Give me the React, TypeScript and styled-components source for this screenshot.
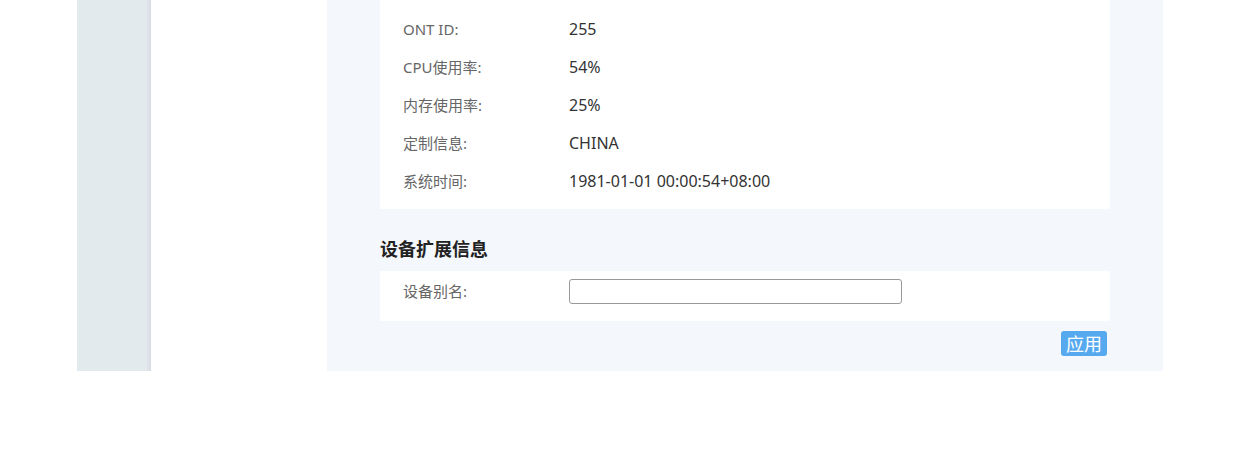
import React from "react";
import styled, { createGlobalStyle } from "styled-components";

const Global = createGlobalStyle`
  html, body { margin: 0; padding: 0; background: #ffffff; }
  body { font-family: "Noto Sans", "Noto Sans CJK SC", sans-serif; }
`;

const Page = styled.div`
  display: flex;
  align-items: stretch;
  padding-left: 77px;
  height: 371px;
`;

const Sidebar = styled.div`
  width: 74px;
  background: linear-gradient(to right, #e3eaee 0, #e3eaee 69px, #dde3e8 71px, #d6dce2 74px);
`;

const Spacer = styled.div`
  width: 176px;
`;

const Panel = styled.div`
  width: 836px;
  box-sizing: border-box;
  background: #f4f7fb;
  padding: 0 53px 15px;
  display: flex;
  flex-direction: column;
`;

const Card = styled.div<{ $pad: string }>`
  background: #ffffff;
  padding: ${(p) => p.$pad};
  display: flex;
  flex-direction: column;
`;

const Row = styled.div<{ $h: number; $align: string }>`
  display: flex;
  align-items: ${(p) => p.$align};
  height: ${(p) => p.$h}px;
  line-height: ${(p) => p.$h}px;
`;

const Label = styled.div`
  width: 166px;
  font-size: 15px;
  color: #666666;
`;

const Value = styled.div`
  font-size: 16px;
  color: #333333;
`;

const Heading = styled.div`
  margin: 25px 0 7px;
  font-size: 18px;
  line-height: 30px;
  font-weight: 600;
  color: #222222;
`;

const TextInput = styled.input`
  width: 333px;
  height: 25px;
  box-sizing: border-box;
  border: 1px solid #999999;
  border-radius: 3px;
  background: #ffffff;
  padding: 0 6px;
  font-size: 14px;
  outline: none;
`;

const Actions = styled.div`
  display: flex;
  justify-content: flex-end;
  margin-top: 10px;
  padding-right: 3px;
`;

const Button = styled.button`
  width: 46px;
  height: 25px;
  border: none;
  border-radius: 3px;
  background: #56a9ee;
  color: #ffffff;
  font-size: 18px;
  font-family: "Noto Sans CJK SC", sans-serif;
  padding: 0;
  line-height: 25px;
  cursor: pointer;
`;

const info = [
  ["ONT ID:", "255"],
  ["CPU使用率:", "54%"],
  ["内存使用率:", "25%"],
  ["定制信息:", "CHINA"],
  ["系统时间:", "1981-01-01 00:00:54+08:00"],
];

export default function App() {
  return (
    <>
      <Global />
      <Page>
        <Sidebar />
        <Spacer />
        <Panel>
          <Card $pad="10px 23px 9px">
            {info.map(([l, v]) => (
              <Row key={l} $h={38} $align="baseline">
                <Label>{l}</Label>
                <Value>{v}</Value>
              </Row>
            ))}
          </Card>
          <Heading>设备扩展信息</Heading>
          <Card $pad="8px 23px 17px">
            <Row $h={25} $align="center">
              <Label>设备别名:</Label>
              <TextInput type="text" />
            </Row>
          </Card>
          <Actions>
            <Button>应用</Button>
          </Actions>
        </Panel>
      </Page>
    </>
  );
}
